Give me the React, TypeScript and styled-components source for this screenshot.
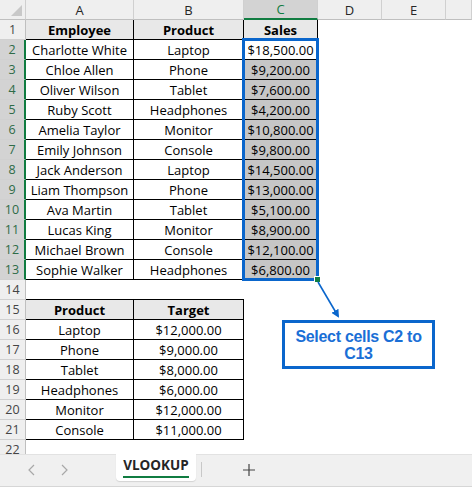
import styled, { createGlobalStyle } from "styled-components";

const GlobalStyle = createGlobalStyle`
  html, body {
    margin: 0;
    padding: 0;
    background: #ffffff;
  }
  body {
    font-family: "Open Sans", "Liberation Sans", sans-serif;
    width: 472px;
    height: 487px;
    overflow: hidden;
  }
`;

const GREEN = "#107c41";
const BLUE = "#0a66cc";

const COLS = ["A", "B", "C", "D", "E", ""];
const COL_WIDTHS = "26px 108px 110px 74px 64px 64px 1fr";

type Cell = { text: string; head?: boolean; sel?: boolean };
type Row = Record<number, Cell>;

const employees: [string, string, string][] = [
  ["Charlotte White", "Laptop", "$18,500.00"],
  ["Chloe Allen", "Phone", "$9,200.00"],
  ["Oliver Wilson", "Tablet", "$7,600.00"],
  ["Ruby Scott", "Headphones", "$4,200.00"],
  ["Amelia Taylor", "Monitor", "$10,800.00"],
  ["Emily Johnson", "Console", "$9,800.00"],
  ["Jack Anderson", "Laptop", "$14,500.00"],
  ["Liam Thompson", "Phone", "$13,000.00"],
  ["Ava Martin", "Tablet", "$5,100.00"],
  ["Lucas King", "Monitor", "$8,900.00"],
  ["Michael Brown", "Console", "$12,100.00"],
  ["Sophie Walker", "Headphones", "$6,800.00"],
];

const targets: [string, string][] = [
  ["Laptop", "$12,000.00"],
  ["Phone", "$9,000.00"],
  ["Tablet", "$8,000.00"],
  ["Headphones", "$6,000.00"],
  ["Monitor", "$12,000.00"],
  ["Console", "$11,000.00"],
];

const rows: Row[] = [];
rows.push({
  0: { text: "Employee", head: true },
  1: { text: "Product", head: true },
  2: { text: "Sales", head: true },
});
employees.forEach(([name, product, sales], i) =>
  rows.push({
    0: { text: name },
    1: { text: product },
    2: { text: sales, sel: i > 0 },
  })
);
rows.push({});
rows.push({
  0: { text: "Product", head: true },
  1: { text: "Target", head: true },
});
targets.forEach(([product, target]) =>
  rows.push({ 0: { text: product }, 1: { text: target } })
);
rows.push({});

const Window = styled.div`
  width: 472px;
  height: 487px;
  display: flex;
  flex-direction: column;
`;

const Viewport = styled.div`
  position: relative;
  height: 454px;
  overflow: hidden;
`;

const Grid = styled.div`
  display: grid;
  grid-template-columns: ${COL_WIDTHS};
  grid-template-rows: 20px;
  grid-auto-rows: 20px;
`;

const Corner = styled.div`
  position: relative;
  background: #efefef;
  border-right: 1px solid #cfcfcf;
  border-bottom: 1px solid #bfbfbf;
  box-sizing: border-box;

  &::after {
    content: "";
    position: absolute;
    right: 3px;
    bottom: 3px;
    border-left: 11px solid transparent;
    border-bottom: 11px solid #c8c8c8;
  }
`;

const ColHead = styled.div<{ $active?: boolean }>`
  box-sizing: border-box;
  display: flex;
  align-items: center;
  justify-content: center;
  font-size: 13px;
  color: ${(p) => (p.$active ? GREEN : "#262626")};
  background: ${(p) => (p.$active ? "#d3d3d3" : "#efefef")};
  border-right: 1px solid #d0d0d0;
  border-bottom: ${(p) => (p.$active ? `2px solid ${GREEN}` : "1px solid #bfbfbf")};
`;

const RowHead = styled.div<{ $active?: boolean }>`
  box-sizing: border-box;
  display: flex;
  align-items: center;
  justify-content: center;
  font-size: 12.5px;
  color: ${(p) => (p.$active ? "#2e6b47" : "#444444")};
  background: ${(p) => (p.$active ? "#d3d3d3" : "#efefef")};
  border-bottom: 1px solid #d0d0d0;
  border-right: ${(p) => (p.$active ? `2px solid ${GREEN}` : "1px solid #bfbfbf")};
`;

const DataCell = styled.div<{ $boxed?: boolean; $head?: boolean; $sel?: boolean; $top?: boolean }>`
  box-sizing: border-box;
  display: flex;
  align-items: center;
  justify-content: center;
  white-space: nowrap;
  font-size: 13px;
  font-weight: ${(p) => (p.$head ? 700 : 400)};
  color: #000000;
  background: ${(p) => (p.$sel ? "#c6c6c6" : p.$head ? "#e8e8e8" : "#ffffff")};
  border-right: ${(p) => (p.$boxed ? "1px solid #000" : "none")};
  border-bottom: ${(p) => (p.$boxed ? "1px solid #000" : "none")};
  border-top: ${(p) => (p.$top ? "1px solid #000" : "none")};
  margin-top: ${(p) => (p.$top ? "-1px" : "0")};
`;

const Selection = styled.div`
  position: absolute;
  left: 242px;
  top: 38px;
  width: 77px;
  height: 243px;
  box-sizing: border-box;
  border: 3px solid ${BLUE};
  pointer-events: none;
`;

const FillHandle = styled.div`
  position: absolute;
  left: 315px;
  top: 277px;
  width: 5px;
  height: 5px;
  background: ${GREEN};
  outline: 1px solid #ffffff;
`;

const Arrow = styled.svg`
  position: absolute;
  left: 0;
  top: 0;
  overflow: visible;
`;

const Callout = styled.div`
  position: absolute;
  left: 282px;
  top: 320px;
  width: 153px;
  height: 49px;
  box-sizing: border-box;
  border: 3px solid ${BLUE};
  background: #ffffff;
  display: flex;
  align-items: center;
  justify-content: center;
  text-align: center;
  font-family: "Liberation Sans", Arial, sans-serif;
  font-weight: 700;
  font-size: 16px;
  line-height: 17px;
  letter-spacing: -0.3px;
  color: #1a6fd6;
  padding: 0 6px;
`;

const TabBar = styled.div`
  flex: 1;
  display: flex;
  align-items: flex-start;
  background: #f0f0f0;
  border-top: 1px solid #e2e2e2;
  border-bottom: 1px solid #d6d6d6;
  box-sizing: border-box;
`;

const NavButton = styled.div`
  width: 32px;
  height: 30px;
  display: flex;
  align-items: center;
  justify-content: center;
  color: #a8a8a8;
`;

const Nav = styled.div`
  display: flex;
  padding-left: 16px;
  width: 100px;
`;

const Tab = styled.div`
  width: 80px;
  height: 27px;
  background: #ffffff;
  border-radius: 0 0 4px 4px;
  box-shadow: 0 1px 1px rgba(0, 0, 0, 0.12);
  display: flex;
  flex-direction: column;
  align-items: center;
  justify-content: center;
  font-size: 13.5px;
  font-weight: 700;
  color: #262626;
  margin-top: -1px;
`;

const TabLabel = styled.span`
  padding-bottom: 2px;
  border-bottom: 2px solid ${GREEN};
  line-height: 17px;
`;

const Divider = styled.div`
  width: 1px;
  height: 15px;
  margin: 7px 0 0 5px;
  background: #c8c8c8;
`;

const AddButton = styled.div`
  margin-left: 41px;
  height: 30px;
  display: flex;
  align-items: center;
  color: #444444;
`;

function Chevron({ dir }: { dir: "left" | "right" }) {
  return (
    <svg width="10" height="12" viewBox="0 0 10 12">
      <path
        d={dir === "left" ? "M7 1 L2 6 L7 11" : "M3 1 L8 6 L3 11"}
        fill="none"
        stroke="currentColor"
        strokeWidth="1.2"
      />
    </svg>
  );
}

export default function App() {
  return (
    <Window>
      <GlobalStyle />
      <Viewport>
        <Grid>
          <Corner />
          {COLS.map((c, i) => (
            <ColHead key={i} $active={c === "C"}>
              {c}
            </ColHead>
          ))}
          {rows.map((row, r) => {
            const n = r + 1;
            const inTable1 = n <= 13;
            const inTable2 = n >= 15 && n <= 21;
            return [
              <RowHead key={`h${n}`} $active={n >= 2 && n <= 13}>
                {n}
              </RowHead>,
              ...COLS.map((_, c) => {
                const cell = row[c];
                const boxed = (inTable1 && c <= 2) || (inTable2 && c <= 1);
                return (
                  <DataCell
                    key={`${n}-${c}`}
                    $boxed={boxed}
                    $head={cell?.head}
                    $sel={cell?.sel}
                    $top={n === 15 && c <= 1}
                  >
                    {cell?.text}
                  </DataCell>
                );
              }),
            ];
          })}
        </Grid>
        <Selection />
        <FillHandle />
        <Arrow width="472" height="454">
          <defs>
            <marker id="head" markerWidth="8" markerHeight="8" refX="6" refY="4" orient="auto" markerUnits="userSpaceOnUse">
              <path d="M0 0 L8 4 L0 8 Z" fill={BLUE} />
            </marker>
          </defs>
          <line x1="318" y1="282" x2="338" y2="316" stroke={BLUE} strokeWidth="1.6" markerEnd="url(#head)" />
        </Arrow>
        <Callout>Select cells C2 to C13</Callout>
      </Viewport>
      <TabBar>
        <Nav>
          <NavButton>
            <Chevron dir="left" />
          </NavButton>
          <NavButton>
            <Chevron dir="right" />
          </NavButton>
        </Nav>
        <Tab>
          <TabLabel>VLOOKUP</TabLabel>
        </Tab>
        <Divider />
        <AddButton>
          <svg width="12" height="12" viewBox="0 0 12 12">
            <path d="M6 0 V12 M0 6 H12" stroke="currentColor" strokeWidth="1.2" />
          </svg>
        </AddButton>
      </TabBar>
    </Window>
  );
}
